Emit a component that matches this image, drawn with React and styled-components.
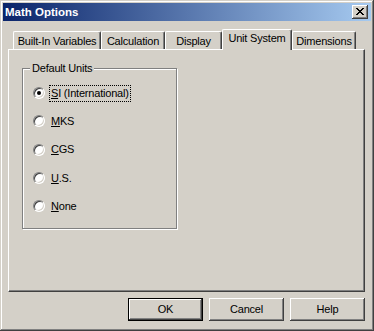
import React from "react";
import styled, { createGlobalStyle } from "styled-components";

const Global = createGlobalStyle`
  html, body { margin: 0; padding: 0; background: #d4d0c8; }
  * { box-sizing: border-box; }
`;

const Window = styled.div`
  width: 374px;
  height: 331px;
  background: #d4d0c8;
  padding: 3px;
  box-shadow: inset -1px -1px #404040, inset 1px 1px #d4d0c8,
    inset -2px -2px #808080, inset 2px 2px #ffffff;
  display: flex;
  flex-direction: column;
  font-family: "Liberation Sans", Arial, sans-serif;
  font-size: 11px;
  letter-spacing: -0.2px;
  color: #000;
`;

const TitleBar = styled.div`
  height: 18px;
  display: flex;
  align-items: center;
  justify-content: space-between;
  padding: 0 3px 0 2px;
  background: linear-gradient(to right, #0a246a, #a6caf0);
`;

const Title = styled.span`
  color: #fff;
  font-weight: bold;
  font-size: 11.5px;
  letter-spacing: 0;
`;

const CloseButton = styled.div`
  width: 16px;
  height: 14px;
  background: #d4d0c8;
  box-shadow: inset -1px -1px #404040, inset 1px 1px #ffffff,
    inset -2px -2px #808080, inset 2px 2px #d4d0c8;
  display: flex;
  align-items: center;
  justify-content: center;
  padding: 0 0 1px 0;
`;

const Body = styled.div`
  flex: 1;
  padding: 8px 6px 0 5px;
  display: flex;
  flex-direction: column;
`;

const TabStrip = styled.div`
  height: 20px;
  display: flex;
  align-items: flex-end;
  padding-left: 5px;
  position: relative;
  z-index: 1;
`;

const Tab = styled.div`
  width: ${(p) => p.$w}px;
  height: ${(p) => (p.$active ? 21 : 18)}px;
  margin-bottom: ${(p) => (p.$active ? -1 : 0)}px;
  background: #d4d0c8;
  border-top: 1px solid #fff;
  border-left: 1px solid #fff;
  border-right: 1px solid #404040;
  border-radius: 2px 2px 0 0;
  box-shadow: inset -1px 0 #808080;
  display: flex;
  align-items: flex-start;
  justify-content: center;
  padding-top: ${(p) => (p.$active ? 2 : 3)}px;
  white-space: nowrap;
  line-height: 13px;
`;

const Panel = styled.div`
  height: 243px;
  border-top: 1px solid #fff;
  border-left: 1px solid #fff;
  border-right: 1px solid #404040;
  border-bottom: 1px solid #404040;
  box-shadow: inset -1px -1px #808080;
  padding: 18px 0 0 13px;
  position: relative;
  z-index: 0;
`;

const Group = styled.div`
  position: relative;
  width: 155px;
  height: 161px;
  border: 1px solid #808080;
  box-shadow: inset 1px 1px #fff, 1px 1px #fff;
  padding: 10px 0 0 10px;
  display: flex;
  flex-direction: column;
`;

const Legend = styled.span`
  position: absolute;
  top: -7px;
  left: 7px;
  padding: 0 2px;
  background: #d4d0c8;
  line-height: 13px;
`;

const RadioRow = styled.div`
  height: 28.3px;
  display: flex;
  align-items: center;
  gap: 5px;
`;

const RadioCircle = styled.span`
  width: 12px;
  height: 12px;
  flex: none;
  border-radius: 50%;
  background: #fff;
  border: 1px solid;
  border-color: #808080 #ffffff #ffffff #808080;
  box-shadow: inset 1px 1px #404040, inset -1px -1px #d4d0c8;
  display: flex;
  align-items: center;
  justify-content: center;
`;

const Dot = styled.span`
  width: 4px;
  height: 4px;
  border-radius: 50%;
  background: #000;
`;

const RadioLabel = styled.span`
  line-height: 13px;
  padding: 1px 1px;
  outline: ${(p) => (p.$focus ? "1px dotted #000" : "none")};
  white-space: nowrap;
`;

const Key = styled.span`
  text-decoration: underline;
`;

const ButtonRow = styled.div`
  margin-top: 6px;
  display: flex;
  justify-content: flex-end;
  gap: 6px;
`;

const Button = styled.div`
  width: 75px;
  height: 23px;
  display: flex;
  align-items: center;
  justify-content: center;
  background: #d4d0c8;
  border: ${(p) => (p.$default ? "1px solid #000" : "none")};
  box-shadow: ${(p) =>
    p.$default
      ? "inset -1px -1px #404040, inset 1px 1px #ffffff, inset -2px -2px #808080"
      : "inset -1px -1px #404040, inset 1px 1px #ffffff, inset -2px -2px #808080, inset 2px 2px #d4d0c8"};
  padding-bottom: 1px;
`;

const CloseGlyph = () => (
  <svg width="8" height="7" viewBox="0 0 8 7" shapeRendering="crispEdges">
    <path
      fill="#000"
      d="M0 0h2v1H0zM6 0h2v1H6zM1 1h2v1H1zM5 1h2v1H5zM2 2h4v1H2zM3 3h2v1H3zM2 4h4v1H2zM1 5h2v1H1zM5 5h2v1H5zM0 6h2v1H0zM6 6h2v1H6z"
    />
  </svg>
);

const tabs = [
  { label: "Built-In Variables", w: 88 },
  { label: "Calculation", w: 64 },
  { label: "Display", w: 57 },
  { label: "Unit System", w: 70, active: true },
  { label: "Dimensions", w: 64 },
];

const units = [
  { key: "S", post: "I (International)", checked: true },
  { key: "M", post: "KS" },
  { key: "C", post: "GS" },
  { key: "U", post: ".S." },
  { key: "N", post: "one" },
];

export default function App() {
  return (
    <>
      <Global />
      <Window>
        <TitleBar>
          <Title>Math Options</Title>
          <CloseButton>
            <CloseGlyph />
          </CloseButton>
        </TitleBar>
        <Body>
          <TabStrip>
            {tabs.map((t) => (
              <Tab key={t.label} $w={t.w} $active={t.active}>
                {t.label}
              </Tab>
            ))}
          </TabStrip>
          <Panel>
            <Group>
              <Legend>Default Units</Legend>
              {units.map((u) => (
                <RadioRow key={u.key}>
                  <RadioCircle>{u.checked && <Dot />}</RadioCircle>
                  <RadioLabel $focus={u.checked}>
                    <Key>{u.key}</Key>
                    {u.post}
                  </RadioLabel>
                </RadioRow>
              ))}
            </Group>
          </Panel>
          <ButtonRow>
            <Button $default>OK</Button>
            <Button>Cancel</Button>
            <Button>Help</Button>
          </ButtonRow>
        </Body>
      </Window>
    </>
  );
}
